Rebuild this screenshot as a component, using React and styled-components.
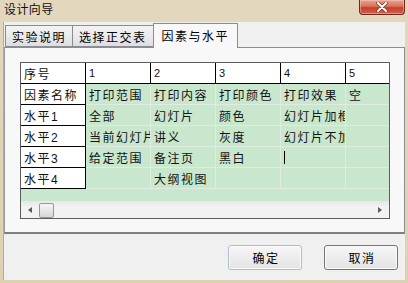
import React from "react";
import styled, { createGlobalStyle } from "styled-components";

const GlobalStyle = createGlobalStyle`
  html, body {
    margin: 0;
    padding: 0;
    background: #ffffff;
  }
  * {
    box-sizing: border-box;
  }
`;

const FONT = `"Liberation Sans", "Noto Sans CJK SC", sans-serif`;

const Window = styled.div`
  width: 408px;
  height: 283px;
  display: flex;
  flex-direction: column;
  background: linear-gradient(180deg, #e3d8bd 0%, #ddd1b2 100%);
  font-family: ${FONT};
  color: #000;
  overflow: hidden;
`;

const TitleBar = styled.div`
  height: 22px;
  flex-shrink: 0;
  display: flex;
  align-items: flex-start;
  padding-left: 4px;
`;

const Title = styled.div`
  font-size: 12px;
  line-height: 21px;
  letter-spacing: 0.4px;
  color: #111;
`;

const CloseButton = styled.div`
  margin-left: auto;
  margin-right: 3px;
  width: 46px;
  height: 15px;
  border: 1px solid #6a2a1e;
  border-top: none;
  border-radius: 0 0 4px 4px;
  background: linear-gradient(180deg, #e9a392 0%, #d9715c 45%, #c4402a 55%, #d0624a 100%);
  box-shadow: inset 0 0 0 1px rgba(255, 210, 200, 0.45);
  display: flex;
  align-items: center;
  justify-content: center;
`;

const Client = styled.div`
  flex: 1;
  margin: 0 3px 3px 3px;
  background: #f0f0f0;
  display: flex;
  flex-direction: column;
  border-left: 1px solid #b0aca0;
`;

const TabStrip = styled.div`
  height: 25px;
  flex-shrink: 0;
  display: flex;
  align-items: flex-end;
  padding-left: 1px;
  position: relative;
  z-index: 1;
`;

const Tab = styled.div`
  height: ${({ $active }) => ($active ? "25px" : "22px")};
  margin-bottom: ${({ $active }) => ($active ? "-1px" : "0")};
  margin-left: ${({ $active }) => ($active ? "-1px" : "-1px")};
  padding: ${({ $active }) => ($active ? "0 8px 2px" : "0 6px")};
  border: 1px solid #898c95;
  border-bottom: ${({ $active }) => ($active ? "none" : "1px solid #898c95")};
  background: ${({ $active }) =>
    $active ? "#f8f8f8" : "linear-gradient(180deg, #f3f3f3 0%, #ebebeb 50%, #dedede 100%)"};
  font-size: 12px;
  letter-spacing: 1.5px;
  display: flex;
  align-items: center;
  white-space: nowrap;

  &:first-child {
    margin-left: 0;
  }
`;

const Panel = styled.div`
  height: 187px;
  flex-shrink: 0;
  border: 1px solid #898c95;
  border-bottom: 2px solid #7c7e84;
  border-left-color: #9a9a9a;
  background: #f8f8f8;
  padding: 14px 0 0 15px;
`;

const Grid = styled.div`
  width: 370px;
  height: 157px;
  border: 1px solid #5c5c5c;
  display: flex;
  flex-direction: column;
  background: #c9e7cd;
`;

const Sheet = styled.div`
  flex: 1;
  overflow: hidden;
  display: grid;
  grid-template-columns: repeat(6, 65px);
  grid-auto-rows: 21px;
  align-content: start;
`;

const Cell = styled.div`
  border-right: 1px solid ${({ $fixed }) => ($fixed ? "#000" : "#e0ece1")};
  border-bottom: 1px solid ${({ $fixed }) => ($fixed ? "#000" : "#e0ece1")};
  background: ${({ $fixed }) => ($fixed ? "#ffffff" : "#c9e7cd")};
  font-size: ${({ $num }) => ($num ? "11px" : "12px")};
  letter-spacing: ${({ $num }) => ($num ? "0" : "1.5px")};
  padding-left: 3px;
  display: flex;
  align-items: center;
  white-space: nowrap;
  overflow: hidden;
  color: #111;
`;

const Caret = styled.span`
  display: inline-block;
  width: 1px;
  height: 13px;
  background: #000;
`;

const ScrollBar = styled.div`
  height: 17px;
  flex-shrink: 0;
  display: flex;
  align-items: center;
  background: linear-gradient(180deg, #e8e8e8 0%, #f2f2f2 30%, #f2f2f2 100%);
  border-top: 1px solid #e4ece5;
`;

const ArrowButton = styled.div`
  width: 17px;
  height: 16px;
  display: flex;
  align-items: center;
  justify-content: center;
  margin-left: ${({ $right }) => ($right ? "auto" : "0")};
  margin-right: ${({ $right }) => ($right ? "1px" : "0")};

  &::before {
    content: "";
    border-top: 3.5px solid transparent;
    border-bottom: 3.5px solid transparent;
    ${({ $right }) =>
      $right ? "border-left: 4px solid #5a5a5a;" : "border-right: 4px solid #5a5a5a;"}
  }
`;

const Thumb = styled.div`
  width: 15px;
  height: 15px;
  margin-left: 1px;
  border: 1px solid #979797;
  border-radius: 2px;
  background: linear-gradient(180deg, #f6f6f6 0%, #e6e6e6 50%, #d6d6d6 100%);
`;

const Footer = styled.div`
  flex: 1;
  display: flex;
  align-items: center;
  justify-content: flex-end;
  gap: 22px;
  padding: 0 7px 0 0;
`;

const Button = styled.div`
  width: 74px;
  height: 25px;
  border: 1px solid ${({ $primary }) => ($primary ? "#a9bdd3" : "#757575")};
  border-radius: 3px;
  background: linear-gradient(180deg, #f6f6f6 0%, #ededed 50%, #e4e4e4 100%);
  box-shadow: inset 0 0 0 1px #fbfbfb;
  font-size: 12px;
  letter-spacing: 1.5px;
  display: flex;
  align-items: center;
  justify-content: center;
  padding-left: 2px;
`;

const headers = ["1", "2", "3", "4", "5"];

const rows = [
  { label: "因素名称", values: ["打印范围", "打印内容", "打印颜色", "打印效果", "空"] },
  { label: "水平1", values: ["全部", "幻灯片", "颜色", "幻灯片加框", ""] },
  { label: "水平2", values: ["当前幻灯片", "讲义", "灰度", "幻灯片不加框", ""] },
  { label: "水平3", values: ["给定范围", "备注页", "黑白", "caret", ""] },
  { label: "水平4", values: ["", "大纲视图", "", "", ""] },
];

const tabs = ["实验说明", "选择正交表", "因素与水平"];

const App = () => {
  return (
    <>
      <GlobalStyle />
      <Window>
        <TitleBar>
          <Title>设计向导</Title>
          <CloseButton>
            <svg width="12" height="10" viewBox="0 0 12 10">
              <path d="M2 1 L10 9 M10 1 L2 9" stroke="#7a3022" strokeWidth="3.4" strokeLinecap="round" />
              <path d="M2 1 L10 9 M10 1 L2 9" stroke="#ffffff" strokeWidth="2" strokeLinecap="round" />
            </svg>
          </CloseButton>
        </TitleBar>
        <Client>
          <TabStrip>
            {tabs.map((t, i) => (
              <Tab key={t} $active={i === 2}>
                {t}
              </Tab>
            ))}
          </TabStrip>
          <Panel>
            <Grid>
              <Sheet>
                <Cell $fixed>序号</Cell>
                {headers.map((h) => (
                  <Cell key={h} $fixed $num>
                    {h}
                  </Cell>
                ))}
                {rows.map((row) => (
                  <React.Fragment key={row.label}>
                    <Cell $fixed>{row.label}</Cell>
                    {row.values.map((v, i) => (
                      <Cell key={i}>{v === "caret" ? <Caret /> : v}</Cell>
                    ))}
                  </React.Fragment>
                ))}
              </Sheet>
              <ScrollBar>
                <ArrowButton />
                <Thumb />
                <ArrowButton $right />
              </ScrollBar>
            </Grid>
          </Panel>
          <Footer>
            <Button $primary>确定</Button>
            <Button>取消</Button>
          </Footer>
        </Client>
      </Window>
    </>
  );
};

export default App;
